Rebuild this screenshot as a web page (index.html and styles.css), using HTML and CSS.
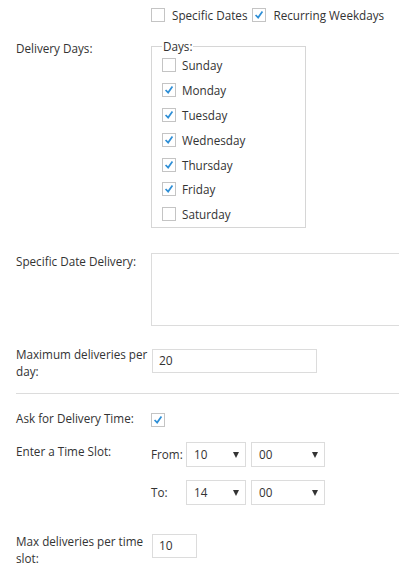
FILE: index.html
```html
<!DOCTYPE html>
<html lang="en">
<head>
  <meta charset="UTF-8" />
  <title>Delivery Settings</title>
  <link rel="stylesheet" href="styles.css">
</head>
<body>
  <div class="form">
    <div class="row row-mode">
      <div class="label"></div>
      <div class="field options">
        <label class="check"><span class="cb"></span>Specific Dates</label>
        <label class="check"><span class="cb"><svg viewBox="0 0 14 14"><path d="M3 7 L6 10 L11 3"/></svg></span>Recurring Weekdays</label>
      </div>
    </div>

    <div class="row row-days">
      <div class="label">Delivery Days:</div>
      <div class="field">
        <fieldset class="days">
          <legend>Days:</legend>
          <label class="day"><span class="cb"></span>Sunday</label>
          <label class="day"><span class="cb"><svg viewBox="0 0 14 14"><path d="M3 7 L6 10 L11 3"/></svg></span>Monday</label>
          <label class="day"><span class="cb"><svg viewBox="0 0 14 14"><path d="M3 7 L6 10 L11 3"/></svg></span>Tuesday</label>
          <label class="day"><span class="cb"><svg viewBox="0 0 14 14"><path d="M3 7 L6 10 L11 3"/></svg></span>Wednesday</label>
          <label class="day"><span class="cb"><svg viewBox="0 0 14 14"><path d="M3 7 L6 10 L11 3"/></svg></span>Thursday</label>
          <label class="day"><span class="cb"><svg viewBox="0 0 14 14"><path d="M3 7 L6 10 L11 3"/></svg></span>Friday</label>
          <label class="day"><span class="cb"></span>Saturday</label>
        </fieldset>
      </div>
    </div>

    <div class="row row-dates">
      <div class="label">Specific Date Delivery:</div>
      <div class="field">
        <textarea class="dates"></textarea>
      </div>
    </div>

    <div class="row row-max">
      <div class="label">Maximum deliveries per day:</div>
      <div class="field">
        <input type="text" class="text max-day" value="20">
      </div>
    </div>

    <hr class="divider">

    <div class="row row-ask">
      <div class="label">Ask for Delivery Time:</div>
      <div class="field">
        <span class="cb"><svg viewBox="0 0 14 14"><path d="M3 7 L6 10 L11 3"/></svg></span>
      </div>
    </div>

    <div class="row row-slot">
      <div class="label">Enter a Time Slot:</div>
      <div class="field slots">
        <div class="slot">
          <span class="slot-label">From:</span>
          <span class="select hour">10</span>
          <span class="select minute">00</span>
        </div>
        <div class="slot">
          <span class="slot-label">To:</span>
          <span class="select hour">14</span>
          <span class="select minute">00</span>
        </div>
      </div>
    </div>

    <div class="row row-slotmax">
      <div class="label">Max deliveries per time slot:</div>
      <div class="field">
        <input type="text" class="text max-slot" value="10">
      </div>
    </div>
  </div>
</body>
</html>
```

FILE: styles.css
```css
body {
  margin: 0;
  font-family: "Open Sans", "Noto Sans", sans-serif;
  font-size: 11.7px;
  color: #333;
  background: #fff;
  overflow: hidden;
}
.form {
  padding: 8px 0 0 16px;
}
.row {
  display: flex;
  align-items: flex-start;
}
.label {
  width: 135px;
  flex-shrink: 0;
  line-height: 17px;
}
.field {
  flex: 1;
}
.cb {
  display: inline-block;
  width: 14px;
  height: 14px;
  box-sizing: border-box;
  border: 1px solid #c4c4c4;
  background: #fff;
  vertical-align: middle;
  flex-shrink: 0;
}
.cb svg {
  display: block;
  width: 12px;
  height: 12px;
}
.cb path {
  fill: none;
  stroke: #2f8fd6;
  stroke-width: 2;
}
.check, .day {
  display: flex;
  align-items: center;
}
.options {
  display: flex;
  gap: 5px;
  line-height: 14px;
}
.options .cb {
  margin-right: 7px;
}
.row-days {
  margin-top: 17px;
}
.row-days .label {
  margin-top: 1px;
}
.days {
  width: 155px;
  box-sizing: border-box;
  margin: 0;
  padding: 0 10px 0;
  border: 1px solid #d6d6d6;
}
.days legend {
  padding: 0 1px;
  line-height: 14px;
}
.day {
  height: 24.8px;
}
.day .cb {
  margin-right: 6px;
}
.row-dates {
  margin-top: 25px;
}
.dates {
  display: block;
  width: 260px;
  height: 73px;
  box-sizing: border-box;
  margin: 0;
  border: 1px solid #dcdcdc;
  resize: none;
}
.row-max {
  margin-top: 20px;
}
.text {
  display: block;
  box-sizing: border-box;
  height: 24px;
  margin: 3px 0 0 1px;
  padding: 0 6px;
  border: 1px solid #dcdcdc;
  font-family: inherit;
  font-size: 12px;
  color: #333;
}
.max-day {
  width: 165px;
}
.divider {
  margin: 13px 0 0;
  border: none;
  border-top: 1px solid #dcdcdc;
}
.row-ask {
  margin-top: 16px;
  align-items: center;
}
.row-slot {
  margin-top: 16px;
}
.slots {
  display: flex;
  flex-direction: column;
  gap: 13px;
  margin-top: -1px;
}
.slot {
  display: flex;
  align-items: center;
}
.slot-label {
  width: 35px;
}
.select {
  position: relative;
  display: block;
  box-sizing: border-box;
  height: 25px;
  line-height: 23px;
  padding-left: 7px;
  border: 1px solid #dcdcdc;
  background: #fff;
}
.select::after {
  content: "";
  position: absolute;
  right: 6px;
  top: 9px;
  border-left: 3.5px solid transparent;
  border-right: 3.5px solid transparent;
  border-top: 6px solid #333;
}
.hour {
  width: 60px;
}
.minute {
  width: 74px;
  margin-left: 5px;
}
.row-slotmax {
  margin-top: 28px;
}
.max-slot {
  width: 45px;
  margin-top: 1px;
}
```
